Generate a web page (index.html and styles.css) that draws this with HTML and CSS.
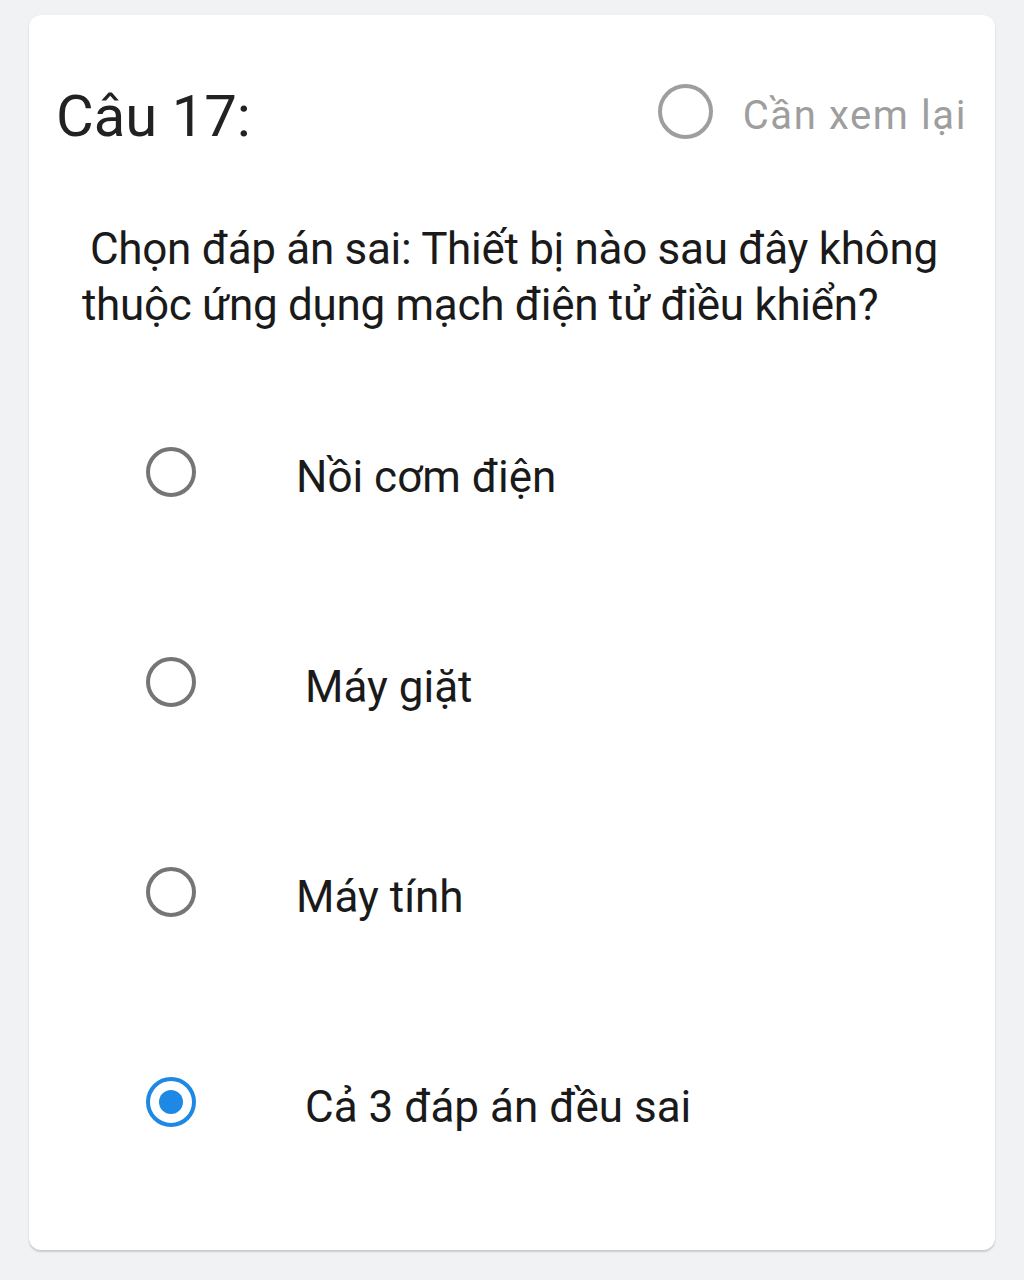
FILE: index.html
```
<!DOCTYPE html>
<html lang="vi">
<head>
<meta charset="utf-8">
<link rel="stylesheet" href="styles.css">
</head>
<body>
<div class="card">
  <div class="header">
    <div class="title">Câu 17:</div>
    <label class="review">
      <span class="ring"></span>
      <span class="review-text">Cần xem lại</span>
    </label>
  </div>
  <div class="question">Chọn đáp án sai: Thiết bị nào sau đây không thuộc ứng dụng mạch điện tử điều khiển?</div>
  <div class="options">
    <div class="option"><span class="radio"></span><span class="opt-text">Nồi cơm điện</span></div>
    <div class="option"><span class="radio"></span><span class="opt-text pad">Máy giặt</span></div>
    <div class="option"><span class="radio"></span><span class="opt-text">Máy tính</span></div>
    <div class="option"><span class="radio checked"></span><span class="opt-text pad">Cả 3 đáp án đều sai</span></div>
  </div>
</div>
</body>
</html>
```
FILE: styles.css
```
* { box-sizing: border-box; }
html, body { margin: 0; padding: 0; }
body {
  background: #f1f2f4;
  font-family: Roboto, "Noto Sans", sans-serif;
  color: #1c1c1c;
  width: 1024px;
  height: 1280px;
  overflow: hidden;
}
.card {
  margin: 15px 0 0 29px;
  width: 966px;
  height: 1235px;
  background: #fff;
  border-radius: 12px;
  box-shadow: 0 2px 2px rgba(0,0,0,0.16), 0 0 1px rgba(0,0,0,0.08);
  padding: 0 30px 0 27px;
}
.header {
  display: flex;
  align-items: center;
  justify-content: space-between;
  padding-top: 70px;
  height: 126px;
}
.title {
  font-size: 58px;
  line-height: 56px;
  padding-top: 6px;
  color: #222;
}
.review {
  display: flex;
  align-items: center;
  gap: 30px;
  color: #9e9e9e;
}
.ring {
  width: 55px;
  height: 55px;
  margin-top: -4px;
  border: 4.5px solid #9e9e9e;
  border-radius: 50%;
}
.review-text {
  font-size: 40px;
  line-height: 56px;
  letter-spacing: 1.6px;
  padding-top: 6px;
  margin-right: -2px;
}
.question {
  margin-top: 80px;
  padding-left: 26px;
  padding-right: 0;
  margin-right: -10px;
  text-indent: 8px;
  font-size: 44px;
  line-height: 56px;
  letter-spacing: -0.3px;
  color: #1a1a1a;
}
.options {
  margin-top: 34px;
  display: flex;
  flex-direction: column;
}
.option {
  height: 210px;
  display: flex;
  align-items: center;
  padding-left: 90px;
}
.radio {
  flex: none;
  width: 50px;
  height: 50px;
  border: 4.5px solid #757575;
  border-radius: 50%;
  display: flex;
  align-items: center;
  justify-content: center;
}
.radio.checked {
  border-color: #1e88e5;
}
.radio.checked::after {
  content: "";
  width: 24px;
  height: 24px;
  border-radius: 50%;
  background: #1e88e5;
}
.opt-text {
  margin-left: 100px;
  padding-top: 10px;
  font-size: 44px;
  line-height: 56px;
  color: #1a1a1a;
}
.opt-text.pad {
  margin-left: 109px;
}
```
